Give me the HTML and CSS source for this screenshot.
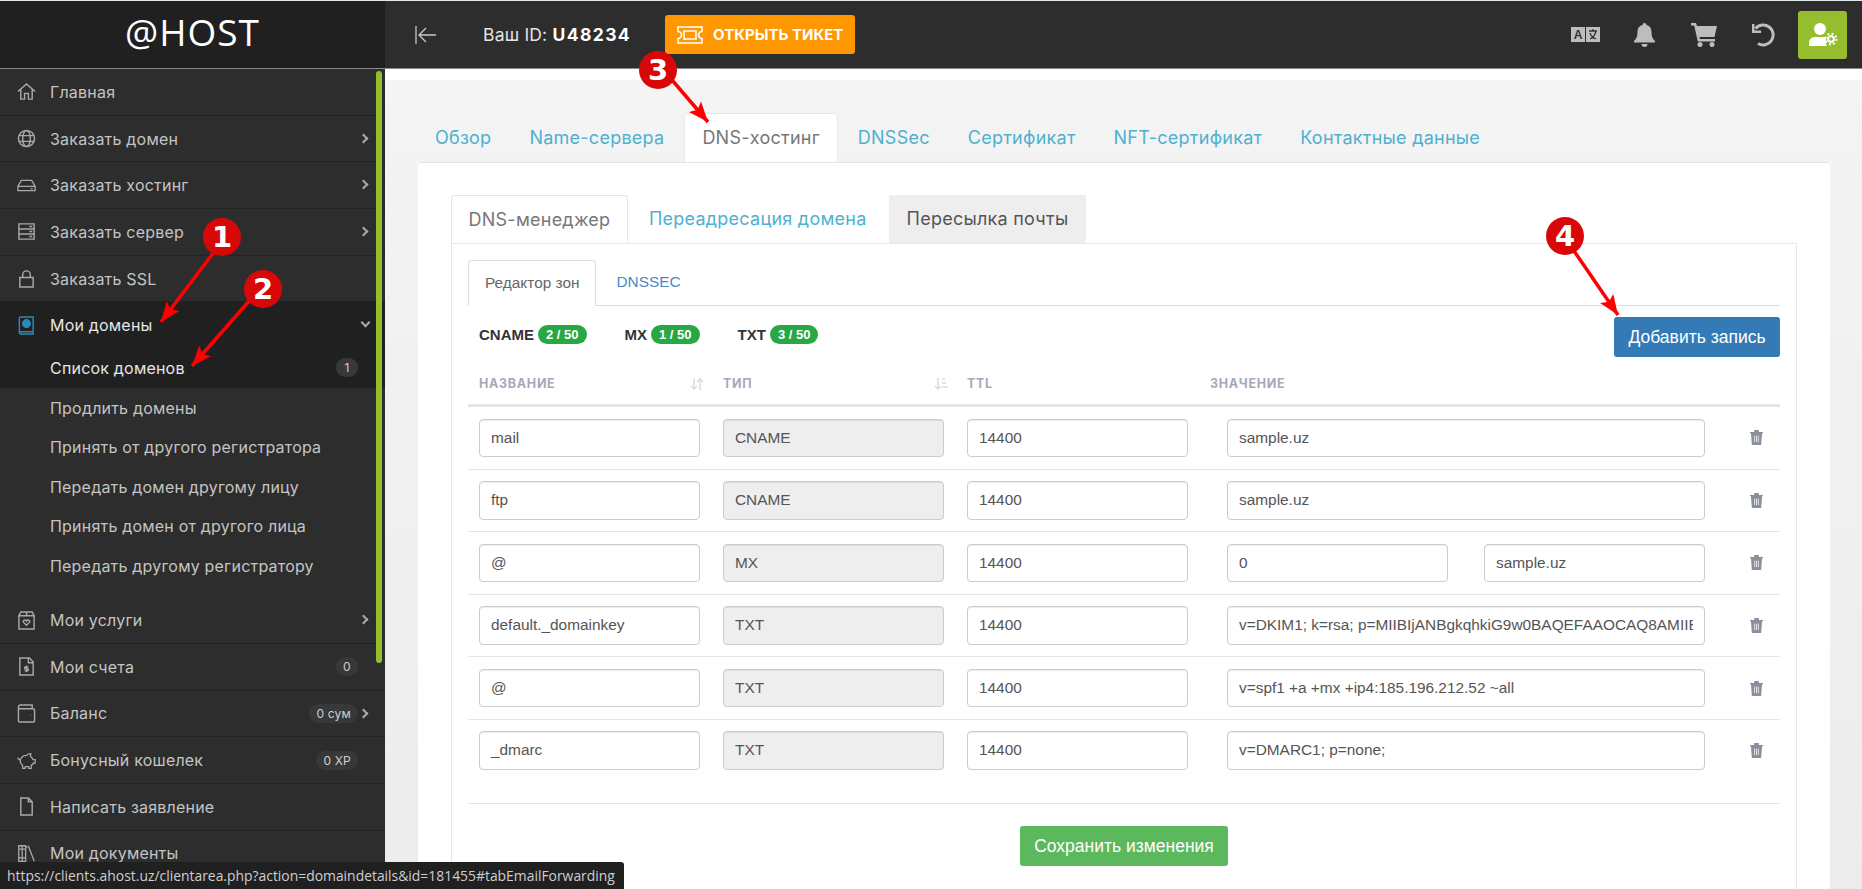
FILE: index.html
```html
<!DOCTYPE html>
<html>

<head>
	<meta charset="utf-8">
	<meta name="viewport" content="width=device-width">
	<title>Мои домены</title>
	<link rel="stylesheet" href="styles.css">
</head>

<body>
	<header class="Topbar">
		<div class="Logo">@HOST</div>
		<div class="TopMain">
			<svg class="BackIcon" viewBox="0 0 22 20"><path d="M1 1v18M21 10H5M11 3l-7 7 7 7"/></svg>
			<div class="UserId">Ваш ID: <b>U48234</b></div>
			<a class="TicketBtn">
				<svg viewBox="0 0 26 18"><path d="M1 1h24v4.500a3.500 3.500 0 0 0 0 7V17H1v-4.500a3.500 3.500 0 0 0 0-7z"/><path d="M7 5h12v8H7z"/></svg>
				ОТКРЫТЬ ТИКЕТ
			</a>
			<div class="TopIcons">
				<svg class="IcoLang" viewBox="0 0 29 15"><path class="fill" d="M0 0h14v15H0zM15 0h14v15H15z"/><text class="LangA" x="7" y="12">A</text><path class="dark" d="M18 4h8M22 2v2M25 4c-1 4-3 7-6 8M19 6c1 3 3 5 6 6"/></svg>
				<svg class="IcoBell" viewBox="0 0 21 24"><path class="fill" d="M10.500 0c1.200 0 2 .9 2 2 3.500.8 5 3.800 5 7 0 5 1.500 7 3.500 9 .3.800-.2 1.500-1 1.500H1c-.8 0-1.300-.7-1-1.500 2-2 3.500-4 3.500-9 0-3.200 1.500-6.200 5-7 0-1.100.8-2 2-2zM7.500 21h6a3 3 0 0 1-6 0z"/></svg>
				<svg class="IcoCart" viewBox="0 0 26 24"><path class="fill" d="M0 0h5l1 3h20l-2.500 11H8.500l.4 2H24v2.500H6.800L3.200 2.500H0z"/><circle class="fill" cx="9" cy="21.500" r="2.500"/><circle class="fill" cx="21" cy="21.500" r="2.500"/></svg>
				<svg class="IcoUndo" viewBox="0 0 24 24"><path class="line" d="M4.500 5.500A10 10 0 1 1 7 20.500"/><path class="fill" d="M1 1h2.500v6.500H10V10H1z"/></svg>
				<div class="UserBox">
					<svg viewBox="0 0 30 24"><circle cx="12" cy="6" r="6"/><path d="M1 23v-3c0-4 3-6 6-6h10c1 0 2 .2 3 .7-2 1.500-3 5-1 8.300z"/><circle class="gear" cx="23" cy="16" r="4.500"/><circle class="teeth" cx="23" cy="16" r="5.500"/><circle class="hub" cx="23" cy="16" r="1.800"/></svg>
				</div>
			</div>
		</div>
	</header>

	<div class="Layout">
		<aside class="Sidebar">
			<div class="Scroll"></div>
			<a class="Item">
				<svg viewBox="0 0 20 20"><path d="M1 10l9-8 9 8M4 8v10h4v-6h4v6h4V8"/></svg>Главная
			</a>
			<a class="Item more">
				<svg viewBox="0 0 20 20"><circle cx="10" cy="10" r="8.500"/><ellipse cx="10" cy="10" rx="4" ry="8.500"/><path d="M2 7h16M2 13h16"/></svg>Заказать домен
			</a>
			<a class="Item more">
				<svg viewBox="0 0 22 20"><path d="M1 11l4-7h12l4 7v5H1zM1 11h20M16 13.500h2"/></svg>Заказать хостинг
			</a>
			<a class="Item more">
				<svg viewBox="0 0 20 20"><path d="M2 2h16v16H2zM2 7.300h16M2 12.600h16M13 4.700h3M13 10h3M13 15.300h3"/></svg>Заказать сервер
			</a>
			<a class="Item">
				<svg viewBox="0 0 20 20"><path d="M3 9h14v10H3zM6 9V6a4 4 0 0 1 8 0v3"/></svg>Заказать SSL
			</a>
			<div class="Open">
				<a class="Item active down">
					<svg viewBox="0 0 20 20"><path d="M4 1h13v18H4c-1 0-1.500-.6-1.500-1.500v-15C2.500 1.600 3 1 4 1zM2.500 16.500H17"/><circle class="blue" cx="10" cy="8" r="4"/></svg>Мои домены
				</a>
				<a class="Sub current">Список доменов<span class="Badge">1</span></a>
			</div>
			<a class="Sub">Продлить домены</a>
			<a class="Sub">Принять от другого регистратора</a>
			<a class="Sub">Передать домен другому лицу</a>
			<a class="Sub">Принять домен от другого лица</a>
			<a class="Sub">Передать другому регистратору</a>
			<div class="SubEnd"></div>
			<a class="Item more">
				<svg viewBox="0 0 20 20"><path d="M2 5h16v14H2zM4 1h12l2 4H2zM10 1v4M10 15l-3-3c-1.500-2 1.500-3.500 3-1.500 1.500-2 4.500-.5 3 1.500z"/></svg>Мои услуги
			</a>
			<a class="Item">
				<svg viewBox="0 0 20 20"><path d="M3 1h10l4 4v14H3zM12 1v5h5M10 9v7M12 10.500H9c-1.500 0-1.500 2 0 2h2c1.500 0 1.500 2 0 2H8"/></svg>Мои счета<span class="Badge">0</span>
			</a>
			<a class="Item more">
				<svg viewBox="0 0 20 20"><path d="M3 1h13v4M1.500 4c0-2 1-3 2-3M1.500 4v13c0 1 .8 2 2 2h13c1 0 2-1 2-2V7c0-1-1-2-2-2H3.500c-1 0-2-.3-2-1zM14 12h.5"/></svg>Баланс<span class="Badge">0 сум</span>
			</a>
			<a class="Item">
				<svg viewBox="0 0 22 20"><path d="M4 9c1-3 4-5 7-5 1.500-2 3-2 5-2l-.5 3c1.500 1 2.500 2 3 4H21v4h-2c-.5 1-1.500 2-2.500 2.500V19h-3v-2h-4v2h-3v-3.500C4 14 3.500 11.500 4 9zM4 9C2.500 9 1 8 1 6.500"/></svg>Бонусный кошелек<span class="Badge">0 XP</span>
			</a>
			<a class="Item">
				<svg viewBox="0 0 20 20"><path d="M4 1h8l4 4v14H4zM12 1v4h4"/></svg>Написать заявление
			</a>
			<a class="Item">
				<svg viewBox="0 0 22 20"><path d="M2 1h4v18H2zM6 1h4v18H6zM2 5h8M2 15h8M13 1l7 18M11 2l1 1"/></svg>Мои документы
			</a>
		</aside>

		<main class="Content">
			<div class="WhiteStrip"></div>
			<div class="Page">
				<nav class="Tabs">
					<a>Обзор</a>
					<a>Name-сервера</a>
					<a class="on">DNS-хостинг</a>
					<a>DNSSec</a>
					<a>Сертификат</a>
					<a>NFT-сертификат</a>
					<a>Контактные данные</a>
				</nav>
				<section class="Card">
					<nav class="Tabs2">
						<a class="on">DNS-менеджер</a>
						<a>Переадресация домена</a>
						<a class="gray">Пересылка почты</a>
					</nav>
					<div class="TabBox">
						<nav class="Tabs3">
							<a class="on">Редактор зон</a>
							<a>DNSSEC</a>
						</nav>
						<div class="Stats">
							<div class="Stat"><b>CNAME</b><span class="Pill">2 / 50</span></div>
							<div class="Stat"><b>MX</b><span class="Pill">1 / 50</span></div>
							<div class="Stat"><b>TXT</b><span class="Pill">3 / 50</span></div>
							<a class="AddBtn">Добавить запись</a>
						</div>
						<div class="Row Head">
							<div>НАЗВАНИЕ<svg class="Sort" viewBox="0 0 14 14"><path d="M4 1v11M1 9l3 3 3-3M10 13V2M7 5l3-3 3 3"/></svg></div>
							<div>ТИП<svg class="Sort" viewBox="0 0 14 14"><path d="M4 1v11M1 9l3 3 3-3M8 2h3M8 6h4M8 10h6"/></svg></div>
							<div>TTL</div>
							<div class="ValueHead">ЗНАЧЕНИЕ</div>
						</div>

						<div class="Row">
							<div class="Field">mail</div>
							<div class="Field off">CNAME</div>
							<div class="Field">14400</div>
							<div class="Field"><span>sample.uz</span></div>
							<svg class="Trash" viewBox="0 0 14 16"><path d="M1 3h12l-1 13H2zM0 2h14v1.500H0zM4.500 0h5v2h-5z"/><path class="cut" d="M5 6v7M7 6v7M9 6v7"/></svg>
						</div>
						<div class="Row">
							<div class="Field">ftp</div>
							<div class="Field off">CNAME</div>
							<div class="Field">14400</div>
							<div class="Field"><span>sample.uz</span></div>
							<svg class="Trash" viewBox="0 0 14 16"><path d="M1 3h12l-1 13H2zM0 2h14v1.500H0zM4.500 0h5v2h-5z"/><path class="cut" d="M5 6v7M7 6v7M9 6v7"/></svg>
						</div>
						<div class="Row">
							<div class="Field">@</div>
							<div class="Field off">MX</div>
							<div class="Field">14400</div>
							<div class="Pair">
								<div class="Field">0</div>
								<div class="Field">sample.uz</div>
							</div>
							<svg class="Trash" viewBox="0 0 14 16"><path d="M1 3h12l-1 13H2zM0 2h14v1.500H0zM4.500 0h5v2h-5z"/><path class="cut" d="M5 6v7M7 6v7M9 6v7"/></svg>
						</div>
						<div class="Row">
							<div class="Field">default._domainkey</div>
							<div class="Field off">TXT</div>
							<div class="Field">14400</div>
							<div class="Field"><span>v=DKIM1; k=rsa; p=MIIBIjANBgkqhkiG9w0BAQEFAAOCAQ8AMIIB</span></div>
							<svg class="Trash" viewBox="0 0 14 16"><path d="M1 3h12l-1 13H2zM0 2h14v1.500H0zM4.500 0h5v2h-5z"/><path class="cut" d="M5 6v7M7 6v7M9 6v7"/></svg>
						</div>
						<div class="Row">
							<div class="Field">@</div>
							<div class="Field off">TXT</div>
							<div class="Field">14400</div>
							<div class="Field"><span>v=spf1 +a +mx +ip4:185.196.212.52 ~all</span></div>
							<svg class="Trash" viewBox="0 0 14 16"><path d="M1 3h12l-1 13H2zM0 2h14v1.500H0zM4.500 0h5v2h-5z"/><path class="cut" d="M5 6v7M7 6v7M9 6v7"/></svg>
						</div>
						<div class="Row last">
							<div class="Field">_dmarc</div>
							<div class="Field off">TXT</div>
							<div class="Field">14400</div>
							<div class="Field"><span>v=DMARC1; p=none;</span></div>
							<svg class="Trash" viewBox="0 0 14 16"><path d="M1 3h12l-1 13H2zM0 2h14v1.500H0zM4.500 0h5v2h-5z"/><path class="cut" d="M5 6v7M7 6v7M9 6v7"/></svg>
						</div>
						<div class="SaveRow"><a class="SaveBtn">Сохранить изменения</a></div>
					</div>
				</section>
			</div>
		</main>
	</div>

	<!-- numbered marks drawn over the screenshot -->
	<svg class="Arrows" viewBox="0 0 1862 889">
		<defs>
			<marker id="head" markerUnits="userSpaceOnUse" markerWidth="22" markerHeight="18" refX="20" refY="9" orient="auto">
				<path d="M0 1l20 8-20 8 4-8z"/>
			</marker>
		</defs>
		<line x1="214" y1="252" x2="161" y2="322"/>
		<line x1="250" y1="300" x2="192" y2="366"/>
		<line x1="672" y1="80" x2="708" y2="122"/>
		<line x1="1572" y1="248" x2="1618" y2="315"/>
	</svg>
	<div class="Mark m1">1</div>
	<div class="Mark m2">2</div>
	<div class="Mark m3">3</div>
	<div class="Mark m4">4</div>

	<div class="StatusTip">https://clients.ahost.uz/clientarea.php?action=domaindetails&amp;id=181455#tabEmailForwarding</div>
</body>

</html>
```

FILE: styles.css
```css
html, body {
	margin: 0;
	padding: 0;
	height: 889px;
	overflow: hidden;
	background: #fff;
}
body {
	border-top: 1px solid #dfe7ef;
	box-sizing: border-box;
	position: relative;
	font-family: "Liberation Sans", sans-serif;
}
a {
	display: block;
}

/* top bar */
.Topbar {
	display: flex;
	height: 68px;
	background: #2d2d2d;
	border-bottom: 1px solid #8a8a8a;
	box-sizing: border-box;
}
.Logo {
	width: 385px;
	height: 67px;
	background: #202020;
	color: #fff;
	font-family: "Open Sans", sans-serif;
	font-size: 37px;
	letter-spacing: 1px;
	line-height: 62px;
	text-align: center;
}
.TopMain {
	flex: 1;
	display: flex;
	align-items: center;
	padding-left: 30px;
	padding-right: 15px;
}
.BackIcon {
	width: 22px;
	height: 20px;
	fill: none;
	stroke: #c8c8c8;
	stroke-width: 1.300;
}
.UserId {
	margin-left: 46px;
	color: #e4e4e4;
	font-family: Inter, sans-serif;
	font-size: 17.500px;
	letter-spacing: .2px;
}
.UserId b {
	color: #fff;
	letter-spacing: 1.400px;
}
.TicketBtn {
	display: flex;
	align-items: center;
	gap: 10px;
	margin-left: 34px;
	height: 39px;
	width: 190px;
	padding-left: 12px;
	box-sizing: border-box;
	background: #ff9800;
	border-radius: 3px;
	color: #fff;
	font-family: Inter, sans-serif;
	font-weight: 700;
	font-size: 15px;
	white-space: nowrap;
}
.TicketBtn svg {
	width: 26px;
	height: 18px;
	fill: none;
	stroke: #fff;
	stroke-width: 1.600;
}
.TopIcons {
	margin-left: auto;
	display: flex;
	align-items: center;
}
.TopIcons .fill {
	fill: #bdbdbd;
}
.IcoLang {
	width: 29px;
	height: 15px;
}
.LangA {
	font-family: "Liberation Sans", sans-serif;
	font-weight: 700;
	font-size: 12px;
	text-anchor: middle;
	fill: #333;
}
.IcoLang .dark {
	fill: none;
	stroke: #333;
	stroke-width: 1.300;
}
.IcoBell {
	width: 21px;
	height: 24px;
	margin-left: 34px;
}
.IcoCart {
	width: 26px;
	height: 24px;
	margin-left: 36px;
}
.IcoUndo {
	width: 24px;
	height: 24px;
	margin-left: 34px;
}
.IcoUndo .line {
	fill: none;
	stroke: #bdbdbd;
	stroke-width: 3;
}
.UserBox {
	margin-left: 23px;
	width: 49px;
	height: 48px;
	background: #95bd2e;
	border-radius: 3px;
	display: flex;
	align-items: center;
	justify-content: center;
}
.UserBox svg {
	width: 30px;
	height: 24px;
	fill: #fff;
}
.UserBox .gear {
	stroke: #95bd2e;
	stroke-width: 1;
}
.UserBox .teeth {
	fill: none;
	stroke: #fff;
	stroke-width: 1.800;
	stroke-dasharray: 2 2.300;
}
.UserBox .hub {
	fill: #95bd2e;
}

.Layout {
	display: flex;
	height: 820px;
}

/* sidebar */
.Sidebar {
	position: relative;
	width: 385px;
	flex: none;
	background: #2d2d2d;
	font-family: Inter, sans-serif;
	font-size: 16px;
	letter-spacing: .2px;
	color: #c4c4c4;
	overflow: hidden;
}
.Scroll {
	position: absolute;
	z-index: 1;
	right: 3px;
	top: 2px;
	width: 6px;
	height: 592px;
	background: #95bd2e;
	border-radius: 3px;
}
.Item {
	display: flex;
	align-items: center;
	height: 46.700px;
	box-sizing: border-box;
	padding-left: 17px;
	padding-right: 27px;
	border-bottom: 1px solid #232323;
	position: relative;
}
.Item svg {
	width: 19px;
	height: 19px;
	margin-right: 14px;
	flex: none;
	fill: none;
	stroke: #a9a9a9;
	stroke-width: 1.500;
}
.Item.more::after, .Item.down::after {
	content: "";
	position: absolute;
	right: 18px;
	top: 19px;
	width: 5px;
	height: 5px;
	border-top: 2px solid #aaa;
	border-right: 2px solid #aaa;
	transform: rotate(45deg);
}
.Item.down::after {
	right: 16px;
	top: 17px;
	transform: rotate(135deg);
}
.Open {
	background: #202020;
}
.Item.active {
	height: 45.700px;
	border-bottom: 0;
	color: #e6e6e6;
}
.Item.active svg {
	stroke: #2a8ab8;
}
.Item.active .blue {
	fill: #2a8ab8;
}
.Sub {
	display: flex;
	align-items: center;
	height: 39.600px;
	padding-left: 50px;
	padding-right: 27px;
}
.Sub.current {
	color: #e6e6e6;
}
.SubEnd {
	height: 11.500px;
	border: 0;
}
.Badge {
	margin-left: auto;
	height: 19px;
	line-height: 19px;
	padding: 0 7px;
	min-width: 8px;
	text-align: center;
	border-radius: 10px;
	background: #383838;
	color: #cfcfcf;
	font-size: 12px;
}

/* content */
.Content {
	flex: 1;
	min-width: 0;
	background: #fff;
}
.WhiteStrip {
	height: 11px;
}
.Page {
	height: 809px;
	padding: 34px 32px 0 33px;
	box-sizing: border-box;
	background: linear-gradient(180deg, #f4f4f4, #ececec);
}
.Tabs {
	display: flex;
	gap: 4px;
	height: 48px;
	font-family: Inter, sans-serif;
	font-size: 18px;
	letter-spacing: .25px;
}
.Tabs a {
	padding: 0 17px;
	line-height: 47px;
	color: #4fb0cf;
}
.Tabs a.on {
	background: #fff;
	color: #777;
	box-shadow: 0 -1px 0 #e8e8e8, 1px 0 0 #e8e8e8, -1px 0 0 #e8e8e8;
	border-radius: 3px 3px 0 0;
}
.Card {
	background: #fff;
	height: 727px;
	padding: 32px 33px 0 33px;
	box-sizing: border-box;
	border-top: 1px solid #e4e4e4;
	border-radius: 3px 3px 0 0;
}
.Tabs2 {
	display: flex;
	height: 48px;
	font-family: Inter, sans-serif;
	font-size: 18px;
	letter-spacing: .25px;
}
.Tabs2 a {
	padding: 0 18px;
	line-height: 47px;
	color: #4fb0cf;
}
.Tabs2 a + a {
	margin-left: 3px;
}
.Tabs2 a.on {
	color: #777;
	padding: 0 16.500px;
	border: 1px solid #e6e6e6;
	border-bottom: 0;
	border-radius: 3px 3px 0 0;
	background: #fff;
	height: 48px;
	box-sizing: border-box;
}
.Tabs2 a.gray {
	margin-left: 4px;
	background: #eee;
	color: #555;
}
.TabBox {
	height: 646px;
	padding: 16px 16px 0 16px;
	border: 1px solid #e8e8e8;
	border-bottom: 0;
	box-sizing: border-box;
}
.Tabs3 {
	display: flex;
	height: 45px;
	border-bottom: 1px solid #ddd;
	font-size: 15.400px;
}
.Tabs3 a {
	padding: 0 20px;
	line-height: 44px;
	color: #4a89c8;
}
.Tabs3 a.on {
	color: #666;
	height: 46px;
	box-sizing: border-box;
	border: 1px solid #ddd;
	border-bottom: 0;
	border-radius: 4px 4px 0 0;
	background: #fff;
	padding: 0 16px;
}
.Stats {
	display: flex;
	align-items: center;
	height: 40px;
	margin-top: 11px;
	padding-left: 11px;
}
.Stat {
	display: flex;
	align-items: center;
	gap: 4px;
	margin-right: 38px;
	margin-bottom: 6px;
	color: #333;
	font-size: 15px;
}
.Pill {
	height: 19px;
	line-height: 20px;
	padding: 0 8px;
	border-radius: 10px;
	background: #28a745;
	color: #fff;
	font-weight: 700;
	font-size: 13px;
}
.AddBtn {
	margin-left: auto;
	width: 166px;
	height: 40px;
	line-height: 40px;
	text-align: center;
	border-radius: 3px;
	background: #337ab7;
	color: #fff;
	font-size: 17.500px;
}
.Row {
	display: grid;
	grid-template-columns: 244px 244px 260px 478px 1fr;
	align-items: center;
	height: 62.600px;
	padding-left: 11px;
	box-sizing: border-box;
	border-bottom: 1px solid #e5e5e5;
}
.Row.last {
	height: 84.500px;
	padding-bottom: 22px;
}
.Row.Head {
	height: 50px;
	padding-top: 5px;
	border-bottom: 3px solid #e5e5e5;
	color: #a6a9b8;
	font-family: Inter, sans-serif;
	font-weight: 700;
	font-size: 12.500px;
	letter-spacing: .7px;
}
.Row.Head > div {
	display: flex;
	align-items: center;
	width: 225px;
	position: relative;
}
.Row.Head > .ValueHead {
	margin-left: -17px;
}
.Sort {
	position: absolute;
	right: 0;
	top: 1px;
	width: 14px;
	height: 14px;
	fill: none;
	stroke: #dcdde3;
	stroke-width: 1.600;
}
.Field {
	width: 221px;
	height: 38.500px;
	line-height: 36.500px;
	padding: 0 11px;
	box-sizing: border-box;
	border: 1px solid #ccc;
	border-radius: 4px;
	box-shadow: inset 0 1px 1px rgba(0, 0, 0, .075);
	background: #fff;
	color: #555;
	font-size: 15.400px;
	white-space: nowrap;
	overflow: hidden;
}
.Field span {
	display: block;
	overflow: hidden;
}
.Field.off {
	background: #eee;
}
.Row > .Field:nth-child(4) {
	width: 478px;
}
.Pair {
	display: flex;
	justify-content: space-between;
	width: 478px;
}
.Trash {
	width: 13px;
	height: 15px;
	margin-left: 45px;
	fill: #8a8f9c;
}
.Trash .cut {
	fill: none;
	stroke: #fff;
	stroke-width: .8;
}
.SaveRow {
	display: flex;
	justify-content: center;
	padding-top: 22px;
}
.SaveBtn {
	width: 208px;
	height: 40px;
	line-height: 40px;
	text-align: center;
	border-radius: 3px;
	background: #5cb85c;
	color: #fff;
	font-size: 17.500px;
}

/* overlays */
.Arrows {
	position: absolute;
	left: 0;
	top: -1px;
	width: 1862px;
	height: 889px;
	pointer-events: none;
}
.Arrows line {
	stroke: #f00;
	stroke-width: 3.500;
	marker-end: url(#head);
}
.Arrows marker path {
	fill: #f00;
}
.Mark {
	position: absolute;
	width: 38px;
	height: 38px;
	line-height: 38px;
	border-radius: 50%;
	background: #d90808;
	color: #fff;
	font-family: "DejaVu Sans", sans-serif;
	font-weight: 700;
	font-size: 29px;
	text-align: center;
}
.m1 { left: 203px; top: 217px; }
.m2 { left: 244px; top: 269px; }
.m3 { left: 639px; top: 50px; }
.m4 { left: 1546px; top: 216px; }
.StatusTip {
	position: absolute;
	left: 0;
	bottom: 0;
	width: 624px;
	height: 27px;
	line-height: 28px;
	padding-left: 7px;
	box-sizing: border-box;
	background: #202020;
	border-radius: 0 3px 0 0;
	color: #cfcfcf;
	font-family: "Open Sans", sans-serif;
	font-size: 13.900px;
	white-space: nowrap;
}
```
